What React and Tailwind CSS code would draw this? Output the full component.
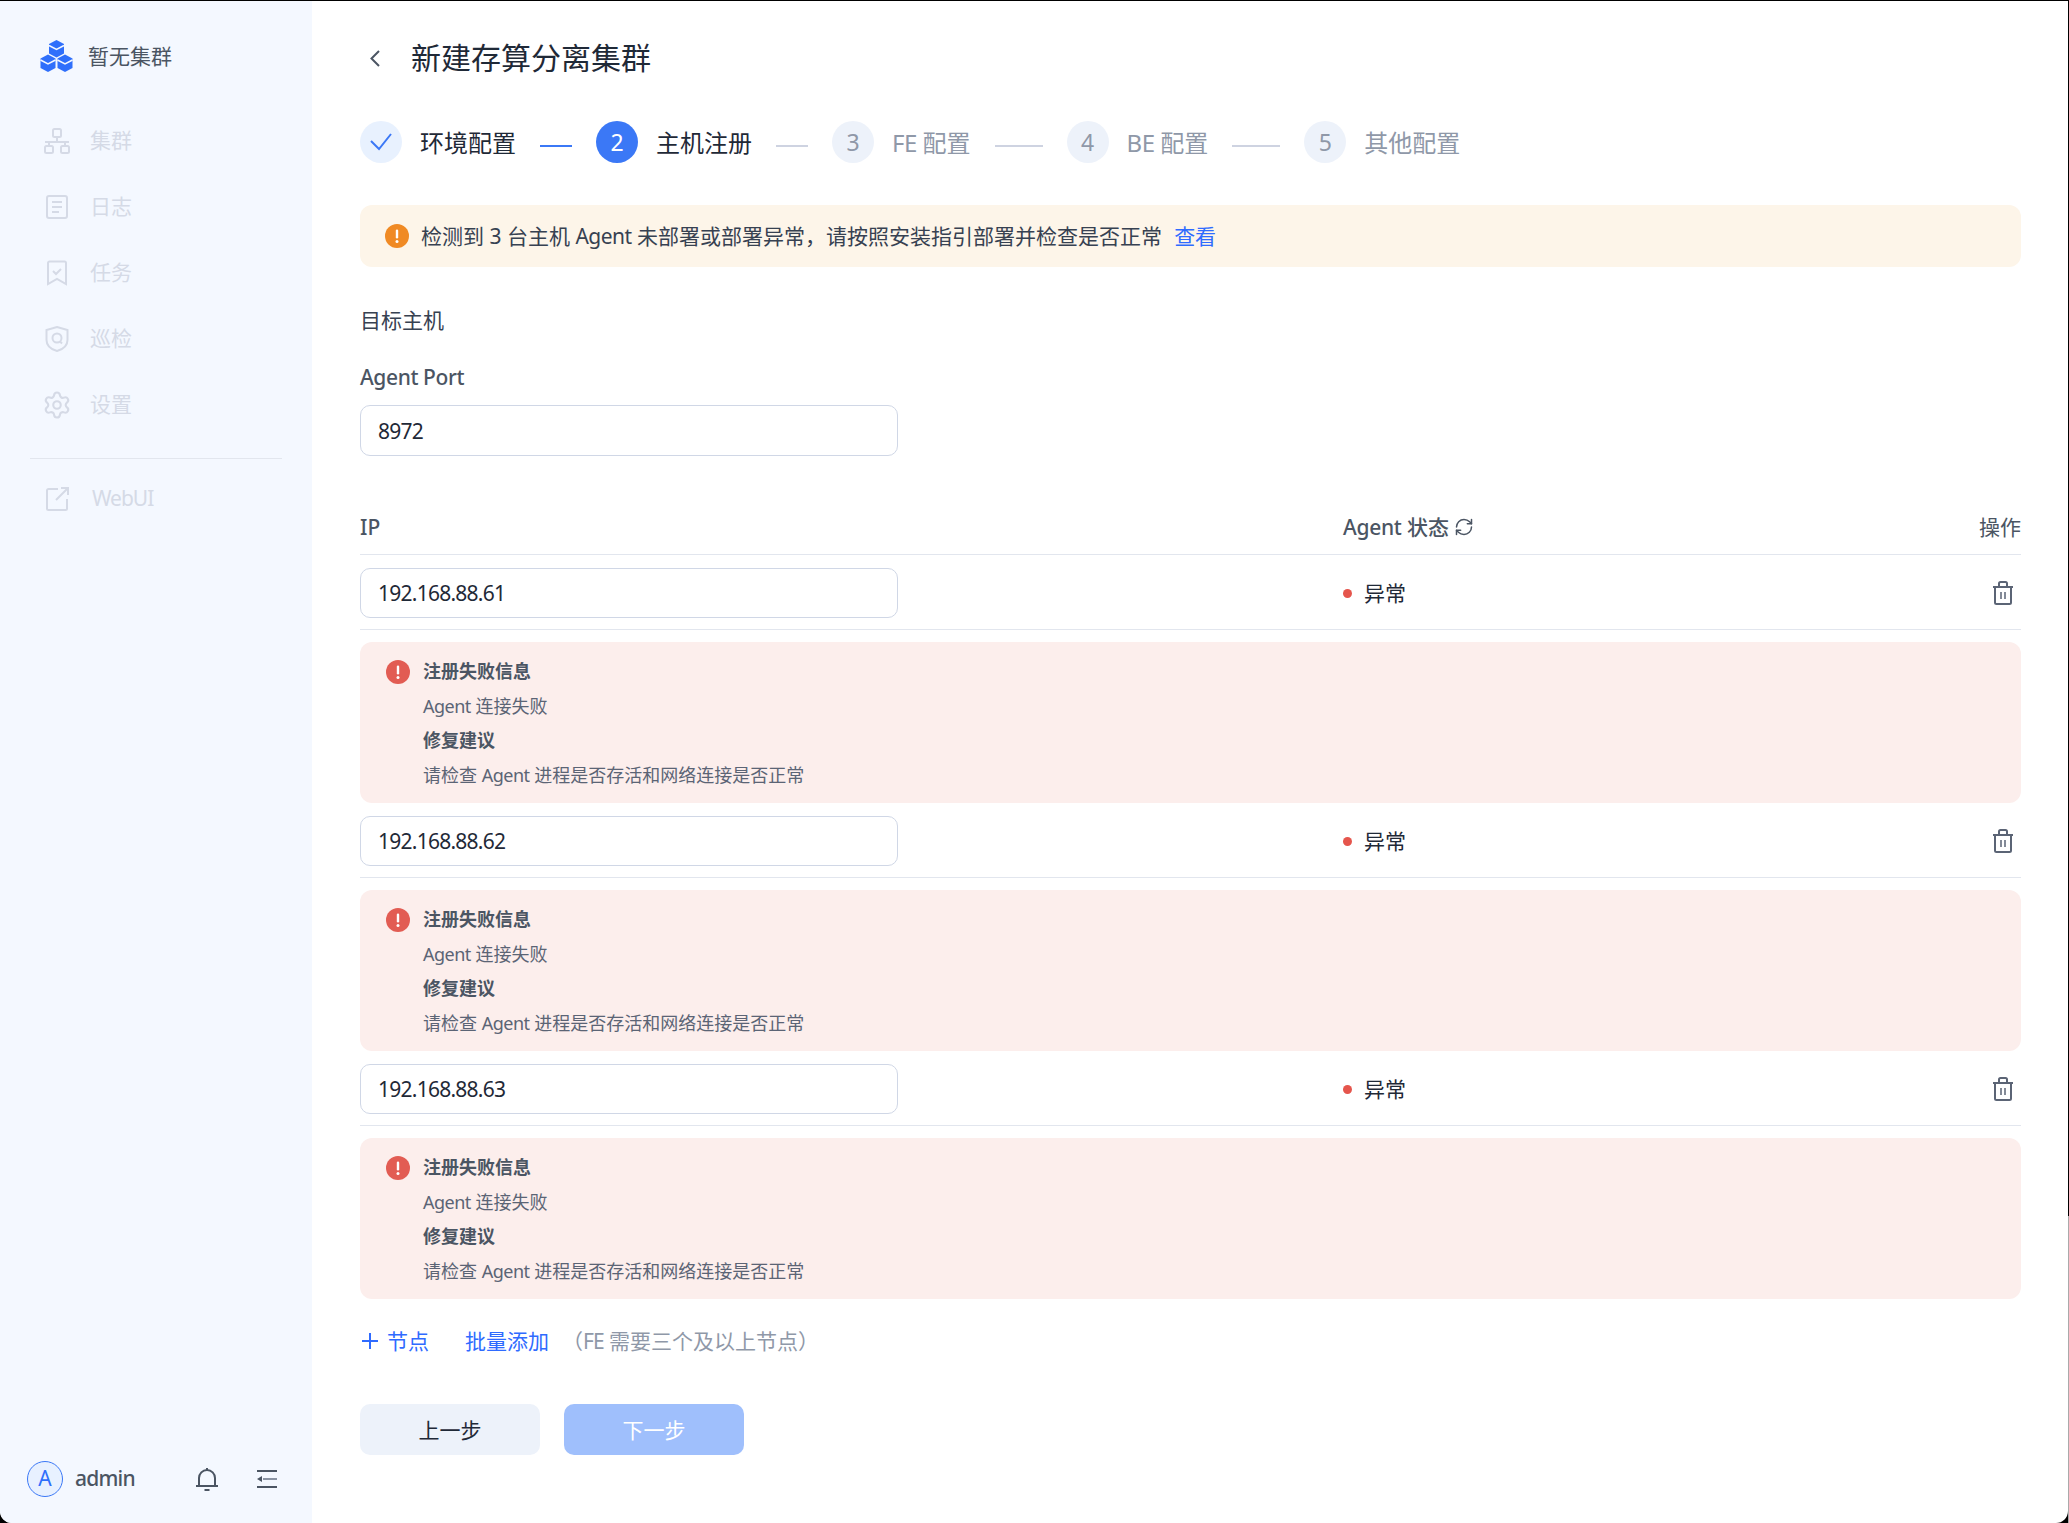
import React from "react";
import { RefreshCw, Settings } from "lucide-react";

const navIconClass = "w-[26px] h-[26px] shrink-0 text-[#d5dae6]";

const NetworkIcon = () => (
  <svg viewBox="0 0 26 26" className={navIconClass} fill="none" stroke="currentColor" strokeWidth="2">
    <rect x="9" y="1" width="8" height="8" rx="1.5" />
    <path d="M13 9v5M1 14h24M5 14v4M21 14v4" />
    <rect x="1" y="18" width="8" height="7" rx="1.5" />
    <rect x="17" y="18" width="8" height="7" rx="1.5" />
  </svg>
);

const LogIcon = () => (
  <svg viewBox="0 0 26 26" className={navIconClass} fill="none" stroke="currentColor" strokeWidth="2">
    <rect x="3" y="2" width="20" height="22" rx="2" />
    <path d="M8 8h10M8 13h10M8 18h7" />
  </svg>
);

const TaskIcon = () => (
  <svg viewBox="0 0 26 26" className={navIconClass} fill="none" stroke="currentColor" strokeWidth="2">
    <path d="M4 3a1.5 1.5 0 0 1 1.5-1.5h15A1.5 1.5 0 0 1 22 3v21l-9-5-9 5z" />
    <path d="M9 11l3 3 5-5" />
  </svg>
);

const ShieldIcon = () => (
  <svg viewBox="0 0 26 26" className={navIconClass} fill="none" stroke="currentColor" strokeWidth="2">
    <path d="M13 1l10.5 3v10c0 6-5 9.500-10.500 11C7.500 23.500 2.500 20 2.500 14V4z" />
    <circle cx="13" cy="12" r="4.500" />
    <path d="M16 15.500l2 2" />
  </svg>
);

const ExternalIcon = () => (
  <svg viewBox="0 0 26 26" className={navIconClass} fill="none" stroke="currentColor" strokeWidth="2">
    <path d="M14 3H4.500A1.500 1.500 0 0 0 3 4.500v18A1.500 1.500 0 0 0 4.500 24h17a1.500 1.500 0 0 0 1.500-1.500V13" />
    <path d="M12 14L23 3M17 2h7v7" />
  </svg>
);

const LogoIcon = () => (
  <svg viewBox="0 0 33 32" className="w-[33px] h-[32px] shrink-0">
    {[
      [16.5, 0],
      [8, 14.5],
      [25, 14.5],
    ].map(([cx, y]) => (
      <g key={cx} transform={`translate(${cx} ${y})`}>
        <path d="M0 0l7.500 4v9.500L0 17.500l-7.500-4V4z" fill="#2f6ffb" />
        <path d="M-7.500 5.500L0 9.500l7.500-4" fill="none" stroke="#f4f8ff" strokeWidth="1.500" />
      </g>
    ))}
  </svg>
);

const AlertDot = ({ color }) => (
  <svg viewBox="0 0 24 24" className="w-6 h-6 shrink-0">
    <circle cx="12" cy="12" r="12" fill={color} />
    <rect x="10.800" y="5.500" width="2.400" height="9" rx="1.200" fill="#fff" />
    <circle cx="12" cy="17.500" r="1.500" fill="#fff" />
  </svg>
);

const TrashIcon = () => (
  <svg viewBox="0 0 22 24" className="w-[22px] h-6" fill="none" stroke="#5b6475" strokeWidth="2">
    <path d="M1 6h20M7 6V2.500A1.500 1.500 0 0 1 8.500 1h5A1.500 1.500 0 0 1 15 2.500V6" />
    <path d="M3 6v15.500A1.500 1.500 0 0 0 4.500 23h13a1.500 1.500 0 0 0 1.500-1.500V6" />
    <path d="M9 11v7M13 11v7" strokeWidth="1.500" />
  </svg>
);

// latin words run a bit narrower in the reference
const Agent = () => <span className="tracking-[-0.5px]">Agent</span>;

const navItems = [
  { label: "集群", icon: <NetworkIcon /> },
  { label: "日志", icon: <LogIcon /> },
  { label: "任务", icon: <TaskIcon /> },
  { label: "巡检", icon: <ShieldIcon /> },
  { label: "设置", icon: <Settings size={30} strokeWidth={1.7} className="w-[26px] h-[26px] shrink-0 text-[#d5dae6] scale-115" /> },
];

const Sidebar = () => (
  <aside className="w-[312px] shrink-0 bg-[#f4f8ff] flex flex-col justify-between rounded-bl-[12px]">
    <div>
      <div className="flex items-center pl-10 pt-[39px] h-[71px] gap-[15px] text-[21px] leading-[32px] text-[#4b5563]">
        <LogoIcon />
        <span>暂无集群</span>
      </div>
      <nav className="mt-9">
        {navItems.map((item) => (
          <div key={item.label} className="h-[66px] flex items-center pl-11 gap-5 text-[21px] text-[#d5dae6]">
            {item.icon}
            <span>{item.label}</span>
          </div>
        ))}
      </nav>
      <div className="mt-5 mx-[30px] h-px bg-[#e2e6ee]" />
      <div className="mt-[7px] h-[66px] flex items-center pl-11 gap-[22px] text-[21px] text-[#d5dae6]">
        <ExternalIcon />
        <span className="tracking-[-1px]">WebUI</span>
      </div>
    </div>
    <div className="flex items-center pl-[27px] pb-[26px]">
      <div className="w-9 h-9 rounded-full border border-[#3b78f6] bg-[#e8f1ff] text-[#2f6ffb] text-[21px] flex items-center justify-center">
        A
      </div>
      <span className="ml-3 text-[21px] font-medium tracking-[-0.8px] text-[#4b5563]">admin</span>
      <svg viewBox="0 0 24 24" className="ml-[60px] w-6 h-6" fill="none" stroke="#4b5563" strokeWidth="2">
        <path d="M1 19h22M4 19v-8a8 8 0 0 1 16 0v8M12 3V1M9.500 23h5" />
      </svg>
      <svg viewBox="0 0 22 18" className="ml-[37px] w-[22px] h-[18px]" fill="none" stroke="#4b5563" strokeWidth="2">
        <path d="M1 1h20M1 17h20" />
        <path d="M7 9h14" stroke="#8a93a3" />
        <path d="M1 9l5-3v6z" fill="#4b5563" stroke="none" />
      </svg>
    </div>
  </aside>
);

const Step = ({ number, label, prefix, state }) => {
  const circle = {
    done: "bg-[#e8f1fe] text-[#3b78f6]",
    active: "bg-[#3b78f6] text-white",
    todo: "bg-[#edf2fa] text-[#8f98a8]",
  }[state];
  return (
    <div className="flex items-center gap-[18px] shrink-0">
      <div className={`w-[42px] h-[42px] rounded-full flex items-center justify-center text-[23px] ${circle}`}>
        {state === "done" ? (
          <svg viewBox="0 0 22 18" className="w-[22px] h-[18px]" fill="none" stroke="currentColor" strokeWidth="2">
            <path d="M1 8l8 8L21 1" />
          </svg>
        ) : (
          number
        )}
      </div>
      <span className={`pt-[2px] text-[24px] leading-[34px] ${state === "todo" ? "text-[#8f98a8]" : "text-[#1f2937]"}`}>
        {prefix && <span className="tracking-[-0.5px]">{prefix} </span>}
        {label}
      </span>
    </div>
  );
};

const Stepper = () => (
  <div className="mt-[43px] flex items-center h-[42px]">
    <Step label="环境配置" state="done" />
    <div className="mx-6 mt-[8px] w-8 h-[2px] bg-[#3b78f6]" />
    <Step number={2} label="主机注册" state="active" />
    <div className="mx-6 mt-[8px] w-8 h-[2px] bg-[#ced3e1]" />
    <Step number={3} prefix="FE" label="配置" state="todo" />
    <div className="mx-6 mt-[8px] w-[48px] h-[2px] bg-[#ced3e1]" />
    <Step number={4} prefix="BE" label="配置" state="todo" />
    <div className="mx-6 mt-[8px] w-[48px] h-[2px] bg-[#ced3e1]" />
    <Step number={5} label="其他配置" state="todo" />
  </div>
);

const HostRow = ({ ip }) => (
  <div className="pt-[13px]">
    <div className="grid grid-cols-[983px_1fr_auto] items-center pb-[11px] border-b border-[#e2e6ee]">
      <input
        readOnly
        value={ip}
        className="w-[538px] h-[50px] rounded-[10px] border border-[#d0d7e6] px-[17px] text-[21px] tracking-[-0.75px] text-[#1f2937] outline-none"
      />
      <div className="flex items-center gap-3 text-[21px] text-[#1f2937]">
        <span className="w-[9px] h-[9px] rounded-full bg-[#e5554c]" />
        <span className="pt-px">异常</span>
      </div>
      <div className="pr-[7px] flex">
        <TrashIcon />
      </div>
    </div>
    <div className="mt-3 h-[161px] rounded-[12px] bg-[#fceeec] pl-[26px] pt-3 flex gap-[13px]">
      <div className="pt-[6px]">
        <AlertDot color="#e25c53" />
      </div>
      <div className="text-[18px] leading-[34.500px] text-[#5b6475]">
        <p className="font-bold text-[#4b5563]">注册失败信息</p>
        <p><Agent /> 连接失败</p>
        <p className="font-bold text-[#4b5563]">修复建议</p>
        <p>请检查 <Agent /> 进程是否存活和网络连接是否正常</p>
      </div>
    </div>
  </div>
);

const App = () => (
  <div className="relative w-[2069px] h-[1523px] overflow-hidden bg-black pt-px pr-px font-['Noto_Sans','Noto_Sans_CJK_SC',sans-serif]">
    <div className="flex h-[1522px] bg-white rounded-b-[12px]">
      <Sidebar />
      <main className="flex-1 min-w-0 pl-12 pr-[47px] pt-[37px]">
        <div className="flex items-center h-10">
          <svg viewBox="0 0 10 17" className="ml-[10px] w-[10px] h-[17px]" fill="none" stroke="#4b5563" strokeWidth="2">
            <path d="M9 1L1.500 8.500 9 16" />
          </svg>
          <h1 className="ml-[31px] text-[30px] leading-10 font-normal text-[#1f2937]">新建存算分离集群</h1>
        </div>

        <Stepper />

        <div className="mt-[42px] h-[62px] rounded-[12px] bg-[#fdf5e9] pl-[25px] flex items-center gap-3 text-[21px] text-[#374151]">
          <AlertDot color="#f08a24" />
          <span className="pt-[2px]">检测到 3 台主机 <Agent /> 未部署或部署异常，请按照安装指引部署并检查是否正常</span>
          <span className="pt-[2px] text-[#2f6bff]">查看</span>
        </div>

        <p className="mt-[39px] text-[21px] leading-7 text-[#374151]">目标主机</p>
        <p className="mt-[29px] text-[21px] leading-7 font-medium tracking-[-0.4px] text-[#4b5563]">Agent Port</p>
        <input
          readOnly
          value="8972"
          className="mt-[14px] block w-[538px] h-[51px] rounded-[10px] border border-[#d0d7e6] px-[17px] text-[21px] tracking-[-0.75px] text-[#1f2937] outline-none"
        />

        <div className="mt-[57px] grid grid-cols-[983px_1fr_auto] pb-[13px] border-b border-[#e2e6ee] text-[21px] leading-7 text-[#4b5563]">
          <span className="font-medium">IP</span>
          <div className="flex items-center gap-[5px]">
            <span className="font-medium"><span className="tracking-[-0.3px]">Agent</span> 状态</span>
            <RefreshCw size={20} strokeWidth={1.8} />
          </div>
          <span>操作</span>
        </div>

        <HostRow ip="192.168.88.61" />
        <HostRow ip="192.168.88.62" />
        <HostRow ip="192.168.88.63" />

        <div className="mt-[28px] flex items-center h-7 text-[21px] leading-7 text-[#2f6bff]">
          <svg viewBox="0 0 16 16" className="ml-[2px] w-4 h-4" fill="none" stroke="currentColor" strokeWidth="2">
            <path d="M8 0v16M0 8h16" />
          </svg>
          <span className="ml-[9px]">节点</span>
          <span className="ml-[36px]">批量添加</span>
          <span className="ml-[13px] text-[#8f98a8]">（<span className="tracking-[-1px]">FE</span> 需要三个及以上节点）</span>
        </div>

        <div className="mt-[49px] flex gap-6">
          <button className="w-[180px] h-[51px] pt-[2px] rounded-[10px] bg-[#edf2fa] text-[21px] text-[#1f2937]">上一步</button>
          <button className="w-[180px] h-[51px] pt-[2px] rounded-[10px] bg-[#9fbffc] text-[21px] text-white">下一步</button>
        </div>
      </main>
    </div>
    <div className="absolute right-0 top-[1216px] bottom-0 w-px bg-[#aaaaaa]" />
  </div>
);

export default App;
